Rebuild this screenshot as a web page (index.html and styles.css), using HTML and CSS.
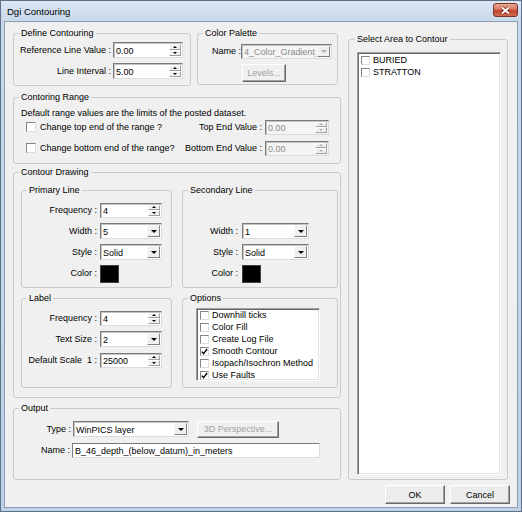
FILE: index.html
```html
<!DOCTYPE html>
<html lang="en">
<head>
  <meta charset="UTF-8" />
  <title>Dgi Contouring</title>
  <link rel="stylesheet" href="styles.css">
</head>
<body>
  <div class="window">
    <div class="titlebar">
      <span class="title">Dgi Contouring</span>
      <span class="close">
        <svg width="11" height="9" viewBox="0 0 11 9">
          <path d="M2 1.5L9 7.5M9 1.5L2 7.5" stroke="#7a2b1f" stroke-width="3.4" fill="none"/>
          <path d="M2 1.5L9 7.5M9 1.5L2 7.5" stroke="#fff" stroke-width="1.8" fill="none"/>
        </svg>
      </span>
    </div>

    <div class="client">
      <div class="main">
        <div class="left-col">
          <div class="top-row">
            <fieldset class="grp define">
              <legend>Define Contouring</legend>
              <div class="body">
                <div class="field">
                  <span class="lbl">Reference Line Value :</span>
                  <div class="spin"><span class="val">0.00</span><span class="arrows"><b class="up"></b><b class="dn"></b></span></div>
                </div>
                <div class="field">
                  <span class="lbl">Line Interval :</span>
                  <div class="spin"><span class="val">5.00</span><span class="arrows"><b class="up"></b><b class="dn"></b></span></div>
                </div>
              </div>
            </fieldset>

            <fieldset class="grp palette">
              <legend>Color Palette</legend>
              <div class="body">
                <div class="field">
                  <span class="lbl">Name :</span>
                  <div class="combo dis"><span class="val">4_Color_Gradient_2</span><span class="drop"></span></div>
                </div>
                <div class="btn dis levels">Levels...</div>
              </div>
            </fieldset>
          </div>

          <fieldset class="grp range">
            <legend>Contoring Range</legend>
            <div class="body">
              <div class="note">Default range values are the limits of the posted dataset.</div>
              <div class="field">
                <span class="chk-part"><span class="cb"></span><span class="chk-text">Change top end of the range ?</span></span>
                <span class="lbl">Top End Value :</span>
                <div class="spin dis"><span class="val">0.00</span><span class="arrows"><b class="up"></b><b class="dn"></b></span></div>
              </div>
              <div class="field">
                <span class="chk-part"><span class="cb"></span><span class="chk-text">Change bottom end of the range?</span></span>
                <span class="lbl">Bottom End Value :</span>
                <div class="spin dis"><span class="val">0.00</span><span class="arrows"><b class="up"></b><b class="dn"></b></span></div>
              </div>
            </div>
          </fieldset>

          <fieldset class="grp drawing">
            <legend>Contour Drawing</legend>
            <div class="sub-grid">
              <fieldset class="grp primary">
                <legend>Primary Line</legend>
                <div class="body">
                  <div class="field">
                    <span class="lbl">Frequency :</span>
                    <div class="spin"><span class="val">4</span><span class="arrows"><b class="up"></b><b class="dn"></b></span></div>
                  </div>
                  <div class="field">
                    <span class="lbl">Width :</span>
                    <div class="combo"><span class="val">5</span><span class="drop"></span></div>
                  </div>
                  <div class="field">
                    <span class="lbl">Style :</span>
                    <div class="combo"><span class="val">Solid</span><span class="drop"></span></div>
                  </div>
                  <div class="field">
                    <span class="lbl">Color :</span>
                    <span class="swatch"></span>
                  </div>
                </div>
              </fieldset>

              <fieldset class="grp secondary">
                <legend>Secondary Line</legend>
                <div class="body">
                  <div class="field"></div>
                  <div class="field">
                    <span class="lbl">Width :</span>
                    <div class="combo"><span class="val">1</span><span class="drop"></span></div>
                  </div>
                  <div class="field">
                    <span class="lbl">Style :</span>
                    <div class="combo"><span class="val">Solid</span><span class="drop"></span></div>
                  </div>
                  <div class="field">
                    <span class="lbl">Color :</span>
                    <span class="swatch"></span>
                  </div>
                </div>
              </fieldset>

              <fieldset class="grp label">
                <legend>Label</legend>
                <div class="body">
                  <div class="field">
                    <span class="lbl">Frequency :</span>
                    <div class="spin"><span class="val">4</span><span class="arrows"><b class="up"></b><b class="dn"></b></span></div>
                  </div>
                  <div class="field">
                    <span class="lbl">Text Size :</span>
                    <div class="combo"><span class="val">2</span><span class="drop"></span></div>
                  </div>
                  <div class="field">
                    <span class="lbl">Default Scale&nbsp; 1 :</span>
                    <div class="spin"><span class="val">25000</span><span class="arrows"><b class="up"></b><b class="dn"></b></span></div>
                  </div>
                </div>
              </fieldset>

              <fieldset class="grp options">
                <legend>Options</legend>
                <div class="listbox">
                  <div class="item"><span class="cb"></span>Downhill ticks</div>
                  <div class="item"><span class="cb"></span>Color Fill</div>
                  <div class="item"><span class="cb"></span>Create Log File</div>
                  <div class="item"><span class="cb on"><svg width="7" height="7" viewBox="0 0 7 7"><path d="M0.8 3.6L2.6 5.6L6.2 1" stroke="#000" stroke-width="1.4" fill="none"/></svg></span>Smooth Contour</div>
                  <div class="item"><span class="cb"></span>Isopach/Isochron Method</div>
                  <div class="item"><span class="cb on"><svg width="7" height="7" viewBox="0 0 7 7"><path d="M0.8 3.6L2.6 5.6L6.2 1" stroke="#000" stroke-width="1.4" fill="none"/></svg></span>Use Faults</div>
                </div>
              </fieldset>
            </div>
          </fieldset>

          <fieldset class="grp output">
            <legend>Output</legend>
            <div class="body">
              <div class="field">
                <span class="lbl">Type :</span>
                <div class="combo type"><span class="val">WinPICS layer</span><span class="drop"></span></div>
                <div class="btn dis persp">3D Perspective...</div>
              </div>
              <div class="field">
                <span class="lbl name-lbl">Name :</span>
                <div class="textbox"><span class="val">B_46_depth_(below_datum)_in_meters</span></div>
              </div>
            </div>
          </fieldset>
        </div>

        <fieldset class="grp areas">
          <legend>Select Area to Contour</legend>
          <div class="listbox">
            <div class="item"><span class="cb"></span>BURIED</div>
            <div class="item"><span class="cb"></span>STRATTON</div>
          </div>
        </fieldset>
      </div>

      <div class="actions">
        <div class="btn">OK</div>
        <div class="btn">Cancel</div>
      </div>
    </div>
  </div>
</body>
</html>
```

FILE: styles.css
```css
* {
  box-sizing: border-box;
}
body {
  margin: 0;
  font-family: "Liberation Sans", Arial, sans-serif;
  font-size: 9px;
  color: #000;
}

/* window frame */
.window {
  width: 522px;
  height: 512px;
  border: 1px solid #5f7189;
  background: linear-gradient(#dbe6f3, #c8d8eb 20px, #bfd1e7);
  display: flex;
  flex-direction: column;
}
.titlebar {
  height: 20px;
  display: flex;
  align-items: center;
  justify-content: space-between;
  padding: 0 3px 0 6px;
}
.title {
  font-size: 9.5px;
  margin-top: 1px;
}
.close {
  width: 25px;
  height: 14px;
  margin-top: -2px;
  border: 1px solid #7a3326;
  border-radius: 3px;
  background: linear-gradient(#e9a896, #d6765e 45%, #c2442b 55%, #d06a52);
  display: flex;
  align-items: center;
  justify-content: center;
}
.client {
  height: 487px;
  margin: 0 3px;
  border: 1px solid #8d9db2;
  background: #f0f0f0;
  padding: 5px 9px 0 8px;
}
.main {
  display: flex;
  gap: 7px;
}
.left-col {
  width: 328px;
  display: flex;
  flex-direction: column;
}

/* group boxes */
.grp {
  margin: 0;
  padding: 0;
  min-width: 0;
  border: 1px solid #cbcbcb;
  border-radius: 3px;
}
.grp legend {
  margin-left: 5px;
  padding: 0 2px;
  line-height: 12px;
  font-size: 9px;
}
.top-row {
  display: flex;
  gap: 6px;
}
.define {
  width: 178px;
  height: 59px;
}
.palette {
  width: 141px;
  height: 58px;
}
.range {
  height: 73px;
  margin-top: 5px;
}
.drawing {
  height: 232px;
  margin-top: 2px;
}
.output {
  height: 78px;
  margin-top: 4px;
}
.areas {
  width: 160px;
  height: 447px;
  margin-top: 6px;
}
.areas legend {
  margin-left: 6px;
}

/* rows */
.field {
  display: flex;
  align-items: center;
  height: 16px;
}
.field + .field {
  margin-top: 5px;
}
.lbl {
  text-align: right;
  white-space: nowrap;
}
.val {
  flex: 1;
  padding-left: 2px;
  white-space: nowrap;
  overflow: hidden;
}

.define .body { padding-top: 3px; }
.define .lbl { width: 97px; margin-right: 2px; }
.define .spin { width: 70px; }

.palette .body { padding-top: 4px; }
.palette .lbl { width: 43px; }
.palette .combo { width: 91px; height: 15px; }
.levels {
  width: 44px;
  height: 18px;
  margin: 5px 0 0 44px;
}

.range .note {
  padding: 4px 0 0 7px;
  line-height: 12px;
}
.range .field:first-of-type {
  margin-top: 5px;
}
.chk-part {
  width: 170px;
  padding-left: 12px;
  display: flex;
  align-items: center;
}
.chk-part .cb {
  width: 10px;
  height: 10px;
}
.chk-text {
  margin-left: 4px;
}
.range .lbl { width: 78px; margin-right: 3px; }
.range .spin { width: 64px; height: 15px; }

/* contour drawing */
.sub-grid {
  display: grid;
  grid-template-columns: 151px 156px;
  grid-template-rows: 104px 96px;
  column-gap: 10px;
  row-gap: 4px;
  padding: 6px 0 0 7px;
}
.sub-grid .grp {
  height: 100%;
}
.sub-grid .body {
  padding-top: 6px;
}
.primary .lbl,
.label .lbl {
  width: 75px;
  margin-right: 3px;
}
.primary .spin,
.primary .combo,
.label .spin,
.label .combo {
  width: 62px;
}
.primary .spin,
.label .spin {
  height: 15px;
}
.secondary .lbl {
  width: 55px;
  margin-right: 4px;
}
.secondary .combo {
  width: 67px;
}
.swatch {
  width: 19px;
  height: 18px;
  margin-top: 2px;
  background: #000;
  border: 1px solid #404040;
}
.options .listbox {
  width: 124px;
  height: 73px;
  margin: 4px 0 0 13px;
  padding-left: 3px;
}
.options .cb {
  width: 9px;
  height: 9px;
}

/* output */
.output .body { padding-top: 7px; }
.output .lbl { width: 57px; margin-right: 2px; }
.output .name-lbl { width: 56px; }
.type {
  width: 116px;
}
.persp {
  width: 82px;
  height: 17px;
  margin-left: 8px;
}
.textbox {
  width: 248px;
  height: 15px;
  display: flex;
  align-items: center;
  background: #fff;
  border: 1px solid;
  border-color: #7a7a7a #dcdcdc #dcdcdc #7a7a7a;
}

/* area list */
.areas .listbox {
  width: 144px;
  height: 423px;
  margin: 7px 0 0 8px;
  padding: 1px 0 0 3px;
}
.areas .cb {
  width: 9px;
  height: 9px;
}

/* controls */
.spin,
.combo {
  display: flex;
  align-items: stretch;
  height: 16px;
  background: #fff;
  border: 1px solid;
  border-color: #7a7a7a #dcdcdc #dcdcdc #7a7a7a;
  box-shadow: inset 1px 1px 0 #c4c4c4;
}
.spin .val,
.combo .val,
.textbox .val {
  display: flex;
  align-items: center;
  padding-top: 1px;
}
.arrows {
  width: 12px;
  display: flex;
  flex-direction: column;
  margin: 1px;
}
.arrows b {
  flex: 1;
  background: #f0f0f0;
  border: 1px solid;
  border-color: #fff #a0a0a0 #a0a0a0 #fff;
  display: flex;
  align-items: center;
  justify-content: center;
}
.arrows .up::after,
.arrows .dn::after {
  content: "";
  border-left: 2px solid transparent;
  border-right: 2px solid transparent;
}
.arrows .up::after {
  border-bottom: 2px solid #000;
}
.arrows .dn::after {
  border-top: 2px solid #000;
}
.drop {
  width: 13px;
  margin: 1px;
  background: #f0f0f0;
  border: 1px solid;
  border-color: #f8f8f8 #808080 #808080 #f8f8f8;
  display: flex;
  align-items: center;
  justify-content: center;
}
.drop::after {
  content: "";
  border-left: 3px solid transparent;
  border-right: 3px solid transparent;
  border-top: 3px solid #000;
}
.dis {
  background: #f5f5f5;
}
.dis .val {
  color: #8a8a8a;
}
.dis .arrows .up::after {
  border-bottom-color: #b0b0b0;
}
.dis .arrows .dn::after,
.dis .drop::after {
  border-top-color: #b0b0b0;
}

.cb {
  flex: none;
  display: inline-flex;
  align-items: center;
  justify-content: center;
  background: #fff;
  border: 1px solid;
  border-color: #858585 #dcdcdc #dcdcdc #858585;
}
.listbox {
  background: #fff;
  border: 1px solid;
  border-color: #a0a0a0 #fff #fff #a0a0a0;
  box-shadow: inset 1px 1px 0 #696969, inset -1px -1px 0 #e3e3e3;
}
.item {
  display: flex;
  align-items: center;
  height: 12px;
  gap: 3px;
  white-space: nowrap;
}

.btn {
  display: flex;
  align-items: center;
  justify-content: center;
  background: #ececec;
  border: 1px solid;
  border-color: #fff #696969 #696969 #fff;
  box-shadow: inset -1px -1px 0 #a0a0a0;
}
.btn.dis {
  color: #a0a0a0;
  background: #f0f0f0;
}
.actions {
  display: flex;
  justify-content: flex-end;
  gap: 5px;
  margin: 5px -2px 0 0;
}
.actions .btn {
  width: 60px;
  height: 19px;
}
```
